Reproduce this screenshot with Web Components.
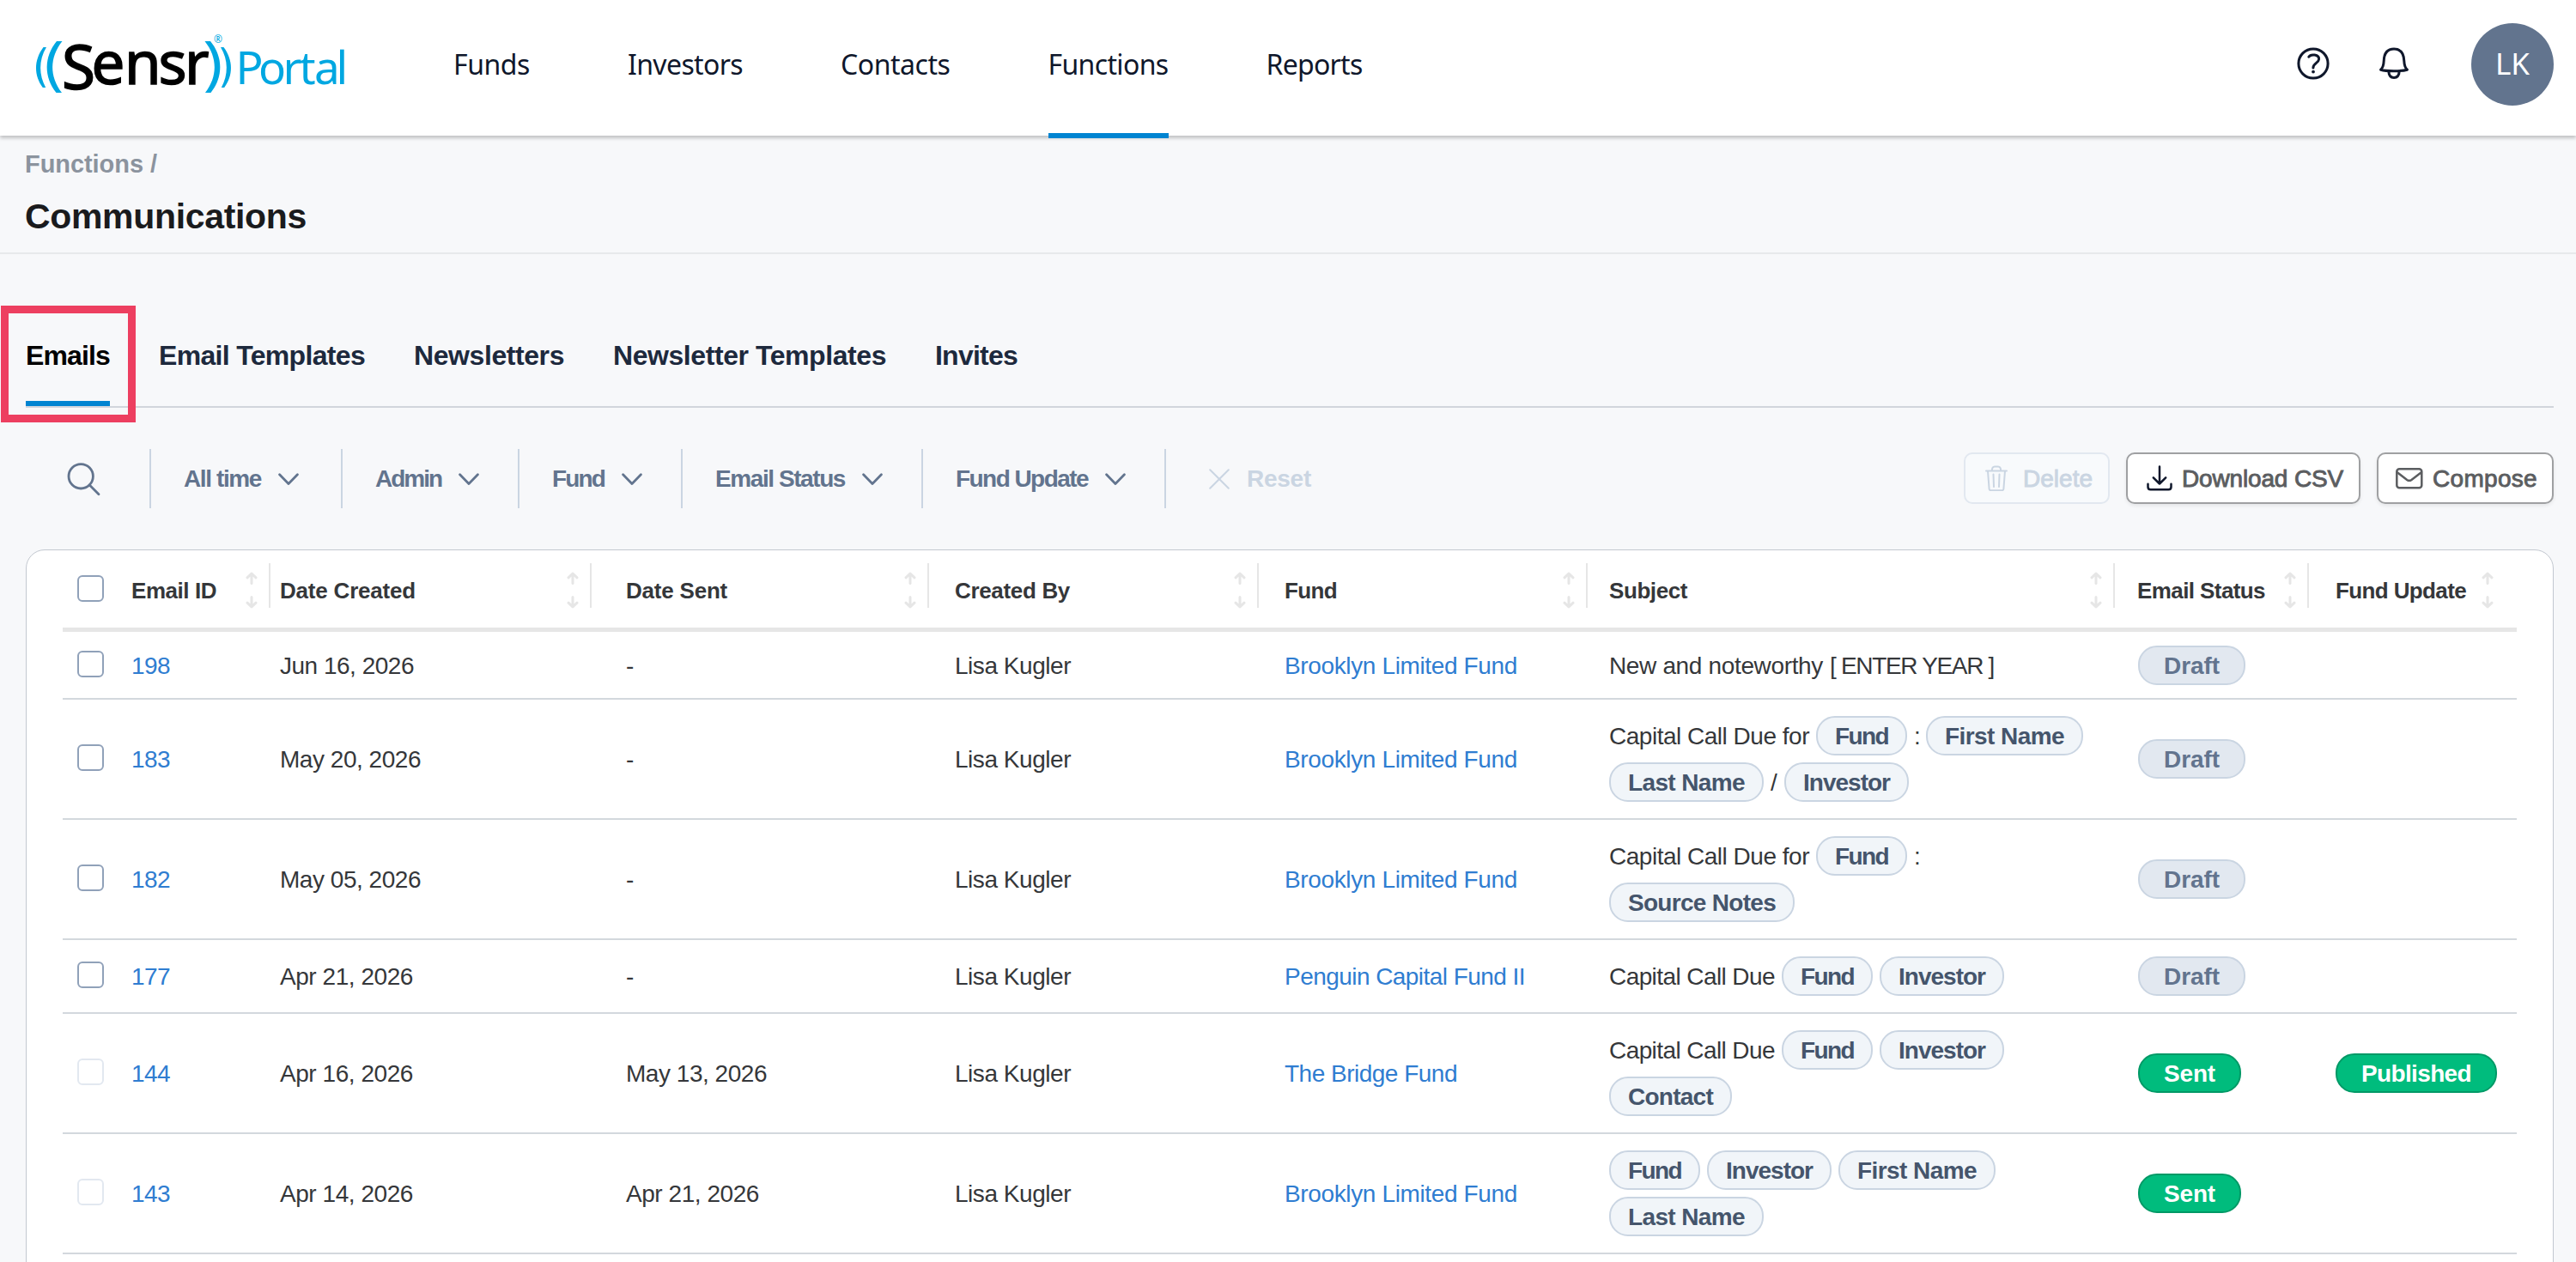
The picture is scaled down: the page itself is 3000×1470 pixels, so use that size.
<!DOCTYPE html>
<html lang="en">
<head>
<meta charset="utf-8">
<title>Communications</title>
<style>
    body {
        margin: 0;
        width: 3000px;
        height: 1470px;
        overflow: hidden;
        background: #f7f8fa;
        font-family: "Liberation Sans", Arial, sans-serif;
        font-size: 28px;
        color: #35373a;
    }
</style>
</head>
<body>
<portal-header></portal-header>
<page-title section="Functions /">Communications</page-title>
<emails-page></emails-page>

<script>
const icons = {
    help: `<circle cx="20" cy="20" r="17.1"/><path d="M14.8 12.2c2.2-3.6 12.2-3 11.8 2.8-.3 4.3-6.7 4.6-6.7 10"/><circle cx="20" cy="29.6" r="1.9" fill="currentColor" stroke="none"/>`,
    bell: `<path d="M4.6 27.2c2.7-2.6 3.4-5.600 3.600-10.2C8.500 8.400 11.400 3 20 3s11.500 5.400 11.800 14c.2 4.600.9 7.600 3.600 10.200C29 29.200 11 29.200 4.600 27.200z"/><path d="M13.800 29.200c.3 4.600 2.700 7.300 6.200 7.300s5.900-2.700 6.200-7.300"/>`,
    search: `<circle cx="16.2" cy="16.8" r="14.200"/><path d="M26.300 27l10.700 10.800"/>`,
    chevron: `<path d="M1.600 1.800L12 12.400 22.400 1.800"/>`,
    close: `<path d="M1.200 1.200l21.600 21.600M22.800 1.200L1.200 22.800"/>`,
    trash: `<path d="M1 6.500h24M3 6.500l1.600 21c.1 1.200.8 1.700 1.800 1.700h13.200c1 0 1.700-.5 1.800-1.700L23 6.500M7.800 6.500c0-3.600 1-5 3.200-5h4c2.200 0 3.200 1.400 3.200 5M9.500 10.500l.5 14.500M16.500 10.500L16 25"/>`,
    download: `<path d="M15 1.500v20M7.800 14.300l7.200 7.200 7.200-7.200M1.500 21.800v3.400c0 2 1 3 3 3h21c2 0 3-1 3-3v-3.400"/>`,
    mail: `<rect x="1.300" y="1.300" width="29" height="22" rx="3"/><path d="M1.800 5.200l11.400 8.700c1.800 1.300 3.400 1.300 5.200 0l11.400-8.700"/>`,
    sort: `<path d="M7 15.500V4.500M2 8.800L7 4l5 4.800M7 31.500v11M2 38.200L7 43l5-4.800"/>`
};

const icon = (name, w, h, stroke) =>
    `<svg width="${w}" height="${h}" viewBox="0 0 ${w} ${h}" fill="none" stroke="currentColor" stroke-width="${stroke}" stroke-linecap="round" stroke-linejoin="round">${icons[name]}</svg>`;

// Text set to a given advance width by adjusting the tracking
class FitText extends HTMLElement {
    constructor() {
        super();
        this.attachShadow({ mode: 'open' });
        this.shadowRoot.innerHTML = `
            <style>
                :host { display: inline-block; white-space: nowrap; }
                span { display: inline-block; }
            </style>
            <span><slot></slot></span>
        `;
    }

    connectedCallback() {
        const width = parseFloat(this.getAttribute('w'));
        const span = this.shadowRoot.querySelector('span');
        const natural = span.getBoundingClientRect().width;
        this.style.width = width + 'px';
        span.style.letterSpacing = (width - natural) / this.textContent.length + 'px';
    }
}

class BrandLogo extends HTMLElement {
    constructor() {
        super();
        this.attachShadow({ mode: 'open' });
        this.shadowRoot.innerHTML = `
            <style>
                :host { display: block; width: 488px; height: 158px; }
                svg { display: block; }
                text { font-family: "Noto Sans", sans-serif; }
            </style>
            <svg width="440" height="158" viewBox="40 0 440 158">
                <g fill="#00a7e1">
                    <path d="M50.500 55h3.500c-9 15-9 32-.8 47h-3.400c-10.500-14-10.500-32 .7-47z"/>
                    <path d="M66 48h6.500c-15 19-15 41-.5 60h-6.500c-14.500-18-14.500-42 .5-60z"/>
                    <path d="M245 48h-6.500c15 19 15 41 .5 60h6.500c14.500-18 14.500-42-.5-60z"/>
                    <path d="M260.500 55H257c9 15 9 32 .8 47h3.400c10.500-14 10.500-32-.7-47z"/>
                </g>
                <g fill="#000" stroke="#000" stroke-width="1.500">
                    <text font-size="71" x="72" y="103.500">S</text>
                    <text font-size="69" x="106.500 145 184.500 215" y="98">ensr</text>
                </g>
                <text font-size="53" fill="#00a7e1" x="274.500 301 329.500 348.500 366 391.500" y="98.300">Portal</text>
                <text font-size="12" fill="#00a7e1" x="249" y="49.500">®</text>
            </svg>
        `;
    }
}

class NavItem extends HTMLElement {
    constructor() {
        super();
        this.attachShadow({ mode: 'open' });
        this.shadowRoot.innerHTML = `
            <style>
                :host {
                    position: relative;
                    display: flex;
                    align-items: center;
                    height: 149px;
                    padding-bottom: 9px;
                    font-size: 32px;
                    color: #0f172b;
                }
                :host([active])::after {
                    content: "";
                    position: absolute;
                    left: 0;
                    right: 0;
                    bottom: -3px;
                    height: 6px;
                    background: #0084d1;
                }
            </style>
            <slot></slot>
        `;
    }
}

class PortalHeader extends HTMLElement {
    constructor() {
        super();
        this.attachShadow({ mode: 'open' });
        this.shadowRoot.innerHTML = `
            <style>
                :host {
                    position: relative;
                    display: flex;
                    box-sizing: border-box;
                    height: 158px;
                    padding: 0 26px 0 40px;
                    background: #fff;
                    box-shadow: 0 3px 4px rgba(0, 0, 0, .22);
                    font-family: "Noto Sans", sans-serif;
                    color: #0f172b;
                }
                nav { display: flex; gap: 114px; }
                .tools {
                    display: flex;
                    margin-left: auto;
                    padding-top: 27px;
                }
                .tools svg { margin: 27px 54px 0 0; }
                .tools svg + svg { margin-right: 70px; }
                .avatar {
                    display: flex;
                    align-items: center;
                    justify-content: center;
                    box-sizing: border-box;
                    width: 96px;
                    height: 96px;
                    padding-bottom: 3px;
                    border-radius: 50%;
                    background: #62748e;
                    color: #fff;
                    font-size: 35px;
                }
            </style>
            <brand-logo></brand-logo>
            <nav>
                <nav-item><fit-text w="89">Funds</fit-text></nav-item>
                <nav-item><fit-text w="134">Investors</fit-text></nav-item>
                <nav-item><fit-text w="127.500">Contacts</fit-text></nav-item>
                <nav-item active><fit-text w="140">Functions</fit-text></nav-item>
                <nav-item><fit-text w="112">Reports</fit-text></nav-item>
            </nav>
            <div class="tools">
                ${icon('help', 40, 40, 3)}
                ${icon('bell', 40, 40, 3)}
                <div class="avatar">LK</div>
            </div>
        `;
    }
}

class PageTitle extends HTMLElement {
    constructor() {
        super();
        this.attachShadow({ mode: 'open' });
        this.shadowRoot.innerHTML = `
            <style>
                :host {
                    display: block;
                    padding: 16px 29px 18px;
                    border-bottom: 2px solid #e7e9eb;
                    font-weight: bold;
                }
                .section {
                    margin-bottom: 20px;
                    font-size: 29px;
                    line-height: 34px;
                    color: #8b939e;
                }
                h1 {
                    margin: 0;
                    font-size: 41px;
                    line-height: 48px;
                    color: #1a1b1d;
                }
            </style>
            <div class="section"><fit-text w="154">${this.getAttribute('section')}</fit-text></div>
            <h1><fit-text w="328">${this.textContent}</fit-text></h1>
        `;
    }
}

class TabItem extends HTMLElement {
    constructor() {
        super();
        this.attachShadow({ mode: 'open' });
        this.shadowRoot.innerHTML = `
            <style>
                :host {
                    display: block;
                    padding-bottom: 33px;
                    border-bottom: 6px solid transparent;
                    font-size: 32px;
                    font-weight: bold;
                    line-height: 40px;
                    color: #1d293d;
                }
                :host([active]) { border-color: #0084d1; color: #000; }
            </style>
            <slot></slot>
        `;
    }
}

class FilterItem extends HTMLElement {
    constructor() {
        super();
        this.attachShadow({ mode: 'open' });
        this.shadowRoot.innerHTML = `
            <style>
                :host {
                    display: flex;
                    align-items: center;
                    gap: 20px;
                    box-sizing: border-box;
                    padding-left: 38px;
                    border-right: 2px solid #cad5e2;
                    font-weight: bold;
                    color: #62748e;
                }
            </style>
            <slot></slot>
            ${icon('chevron', 24, 14, 2.8)}
        `;
    }
}

class UiButton extends HTMLElement {
    constructor() {
        super();
        this.attachShadow({ mode: 'open' });
        this.shadowRoot.innerHTML = `
            <style>
                :host {
                    display: flex;
                    align-items: center;
                    box-sizing: border-box;
                    height: 60px;
                    border: 2px solid #9fa0a2;
                    border-radius: 10px;
                    background: #fff;
                    box-shadow: 0 2px 4px rgba(0, 0, 0, .08);
                    color: #5b5d60;
                    -webkit-text-stroke: .9px currentColor;
                }
                :host([disabled]) {
                    border-color: #e2e8f0;
                    background: #f8fafc;
                    box-shadow: none;
                    color: #cad5e2;
                }
                ::slotted(fit-text) { margin-top: 2px; }
            </style>
            <slot></slot>
        `;
    }
}

class CheckBox extends HTMLElement {
    constructor() {
        super();
        this.attachShadow({ mode: 'open' });
        this.shadowRoot.innerHTML = `
            <style>
                :host {
                    display: block;
                    box-sizing: border-box;
                    width: 31px;
                    height: 31px;
                    border: 2px solid #90a1b9;
                    border-radius: 6px;
                    background: #fff;
                }
                :host([disabled]) { border-color: #e2e8f0; }
            </style>
        `;
    }
}

class ChipTag extends HTMLElement {
    constructor() {
        super();
        this.attachShadow({ mode: 'open' });
        this.shadowRoot.innerHTML = `
            <style>
                :host {
                    display: block;
                    box-sizing: border-box;
                    width: fit-content;
                    height: 46px;
                    padding: 0 20px;
                    border: 2px solid #cad5e2;
                    border-radius: 22px;
                    background: #f1f5f9;
                    color: #45556c;
                    font-weight: bold;
                    line-height: 43px;
                }
                :host([kind]) { padding: 0 28px; }
                :host([kind=draft]) { background: #e2e8f0; color: #62748e; }
                :host([kind=done]) { border-color: #009966; background: #00bc7d; color: #fff; }
            </style>
            <slot></slot>
        `;
    }
}

const columns = '79px 163px 374px 393px 384px 383px 614px 226px 242px';

class HeaderCell extends HTMLElement {
    constructor() {
        super();
        this.attachShadow({ mode: 'open' });
        this.shadowRoot.innerHTML = `
            <style>
                :host {
                    display: flex;
                    justify-content: space-between;
                    align-items: center;
                    box-sizing: border-box;
                    height: 52px;
                    padding: 0 13px 0 var(--pad, 1px);
                    border-right: 2px solid #e6e6e6;
                    font-size: 26px;
                    font-weight: bold;
                }
                :host(:last-of-type) { border-right-color: transparent; padding-right: 25px; }
                .label { padding-top: 12px; }
                svg { color: #e6e6e6; margin-top: 9px; }
            </style>
            <div class="label"><slot></slot></div>
            ${icon('sort', 14, 45, 3)}
        `;
    }
}

class EmailRow extends HTMLElement {
    constructor() {
        super();
        this.attachShadow({ mode: 'open' });
    }

    set data(row) {
        const fit = ([text, w]) => `<fit-text w="${w}">${text}</fit-text>`;
        const subject = row.subject.map(p => p[2] ? `<chip-tag>${fit(p)}</chip-tag>` : fit(p)).join('');
        const status = row.sent
            ? `<chip-tag kind="done">${fit(['Sent', 60])}</chip-tag>`
            : `<chip-tag kind="draft">${fit(['Draft', 65])}</chip-tag>`;
        this.shadowRoot.innerHTML = `
            <style>
                :host {
                    display: grid;
                    grid-template-columns: ${columns};
                    align-items: center;
                    box-sizing: border-box;
                    height: ${row.height}px;
                    border-bottom: 2px solid #d3d8dd;
                }
                check-box { margin: 0 0 3px 17px; }
                .text { padding-top: 2px; }
                .link { color: #2f7dd1; }
                .subject {
                    display: flex;
                    flex-wrap: wrap;
                    align-items: center;
                    gap: 8px;
                    padding: 0 29px 0 25px;
                }
                .subject > fit-text { padding-top: 2px; line-height: 44px; }
            </style>
            <check-box ${row.sent ? 'disabled' : ''}></check-box>
            <div class="text link" style="padding-left:1px">${fit([row.id, 45])}</div>
            <div class="text" style="padding-left:11px">${fit(row.created)}</div>
            <div class="text" style="padding-left:40px">${fit(row.dateSent)}</div>
            <div class="text" style="padding-left:30px">${fit(['Lisa Kugler', 135])}</div>
            <div class="text link" style="padding-left:30px">${fit(row.fund)}</div>
            <div class="subject">${subject}</div>
            <div style="padding-left:27px">${status}</div>
            <div style="padding-left:31px">${row.published ? `<chip-tag kind="done">${fit(['Published', 128])}</chip-tag>` : ''}</div>
        `;
    }
}

// text, width, is it a merge tag
const FUND = ['Fund', 62, true];
const INVESTOR = ['Investor', 101, true];
const FIRST = ['First Name', 139, true];
const LAST = ['Last Name', 136, true];
const NONE = ['-', 10];
const BROOKLYN = ['Brooklyn Limited Fund', 271];

const emails = [
    { id: '198', height: 79, created: ['Jun 16, 2026', 156], dateSent: NONE, fund: BROOKLYN,
      subject: [['New and noteworthy', 249], ['[ ENTER YEAR ]', 191]] },
    { id: '183', height: 140, created: ['May 20, 2026', 164], dateSent: NONE, fund: BROOKLYN,
      subject: [['Capital Call Due for', 233], FUND, [':', 6], FIRST, LAST, ['/', 8], INVESTOR] },
    { id: '182', height: 140, created: ['May 05, 2026', 164], dateSent: NONE, fund: BROOKLYN,
      subject: [['Capital Call Due for', 233], FUND, [':', 6], ['Source Notes', 172, true]] },
    { id: '177', height: 86, created: ['Apr 21, 2026', 155], dateSent: NONE, fund: ['Penguin Capital Fund II', 280],
      subject: [['Capital Call Due', 193], FUND, INVESTOR] },
    { id: '144', height: 140, created: ['Apr 16, 2026', 155], dateSent: ['May 13, 2026', 164], fund: ['The Bridge Fund', 201],
      subject: [['Capital Call Due', 193], FUND, INVESTOR, ['Contact', 99, true]], sent: true, published: true },
    { id: '143', height: 140, created: ['Apr 14, 2026', 155], dateSent: ['Apr 21, 2026', 155], fund: BROOKLYN,
      subject: [FUND, INVESTOR, FIRST, LAST], sent: true }
];

class EmailTable extends HTMLElement {
    constructor() {
        super();
        this.attachShadow({ mode: 'open' });
        this.shadowRoot.innerHTML = `
            <style>
                :host {
                    display: block;
                    box-sizing: border-box;
                    height: 900px;
                    padding: 0 42px;
                    border: 1px solid #c3c8d0;
                    border-radius: 22px;
                    background: #fff;
                }
                .head {
                    display: grid;
                    grid-template-columns: ${columns};
                    box-sizing: border-box;
                    height: 95px;
                    padding-top: 15px;
                    border-bottom: 5px solid #e6e6e6;
                }
                check-box { margin: 14px 0 0 17px; }
            </style>
            <div class="head">
                <check-box></check-box>
                <header-cell><fit-text w="99">Email ID</fit-text></header-cell>
                <header-cell style="--pad:11px"><fit-text w="158">Date Created</fit-text></header-cell>
                <header-cell style="--pad:40px"><fit-text w="118">Date Sent</fit-text></header-cell>
                <header-cell style="--pad:30px"><fit-text w="134">Created By</fit-text></header-cell>
                <header-cell style="--pad:30px"><fit-text w="61">Fund</fit-text></header-cell>
                <header-cell style="--pad:25px"><fit-text w="91">Subject</fit-text></header-cell>
                <header-cell style="--pad:26px"><fit-text w="149">Email Status</fit-text></header-cell>
                <header-cell style="--pad:31px"><fit-text w="152">Fund Update</fit-text></header-cell>
            </div>
            <div class="rows"></div>
        `;
    }

    connectedCallback() {
        const rows = this.shadowRoot.querySelector('.rows');
        emails.forEach(email => {
            const row = document.createElement('email-row');
            rows.append(row);
            row.data = email;
        });
    }
}

class EmailsPage extends HTMLElement {
    constructor() {
        super();
        this.attachShadow({ mode: 'open' });
        this.shadowRoot.innerHTML = `
            <style>
                :host {
                    display: block;
                    padding: 98px 26px 0 30px;
                }
                .tabs {
                    display: flex;
                    gap: 57px;
                    border-bottom: 2px solid #d1d5dc;
                }
                .toolbar {
                    display: flex;
                    height: 69px;
                    margin: 48px 0;
                }
                .search {
                    display: flex;
                    align-items: center;
                    box-sizing: border-box;
                    width: 146px;
                    padding-left: 48px;
                    border-right: 2px solid #cad5e2;
                    color: #62748e;
                }
                .reset {
                    display: flex;
                    align-items: center;
                    gap: 20px;
                    padding-left: 50px;
                    font-weight: bold;
                    color: #cad5e2;
                }
                .actions {
                    display: flex;
                    gap: 19px;
                    margin: 4px 0 0 auto;
                }
                .highlight {
                    position: absolute;
                    left: 1px;
                    top: 356px;
                    box-sizing: border-box;
                    width: 157px;
                    height: 136px;
                    border: 9px solid #ed3f60;
                }
            </style>
            <div class="tabs">
                <tab-item active><fit-text w="98">Emails</fit-text></tab-item>
                <tab-item><fit-text w="240">Email Templates</fit-text></tab-item>
                <tab-item><fit-text w="175">Newsletters</fit-text></tab-item>
                <tab-item><fit-text w="318">Newsletter Templates</fit-text></tab-item>
                <tab-item><fit-text w="96">Invites</fit-text></tab-item>
            </div>
            <div class="toolbar">
                <div class="search">${icon('search', 40, 40, 2.8)}</div>
                <filter-item style="width:223px"><fit-text w="90">All time</fit-text></filter-item>
                <filter-item style="width:206px"><fit-text w="77">Admin</fit-text></filter-item>
                <filter-item style="width:190px"><fit-text w="61">Fund</fit-text></filter-item>
                <filter-item style="width:280px"><fit-text w="151">Email Status</fit-text></filter-item>
                <filter-item style="width:283px"><fit-text w="154">Fund Update</fit-text></filter-item>
                <div class="reset">${icon('close', 24, 24, 2)}<fit-text w="75">Reset</fit-text></div>
                <div class="actions">
                    <ui-button disabled style="width:170px;padding-left:23px;gap:18px">${icon('trash', 26, 30, 2)}<fit-text w="81">Delete</fit-text></ui-button>
                    <ui-button style="width:273px;padding-left:22px;gap:11px"><span style="display:flex;color:#0f172b">${icon('download', 30, 30, 2.5)}</span><fit-text w="188">Download CSV</fit-text></ui-button>
                    <ui-button style="width:206px;padding-left:20px;gap:11px">${icon('mail', 32, 25, 2.5)}<fit-text w="122">Compose</fit-text></ui-button>
                </div>
            </div>
            <email-table></email-table>
            <div class="highlight"></div>
        `;
    }
}

customElements.define('fit-text', FitText);
customElements.define('brand-logo', BrandLogo);
customElements.define('nav-item', NavItem);
customElements.define('tab-item', TabItem);
customElements.define('filter-item', FilterItem);
customElements.define('ui-button', UiButton);
customElements.define('check-box', CheckBox);
customElements.define('chip-tag', ChipTag);
customElements.define('header-cell', HeaderCell);
customElements.define('email-row', EmailRow);
customElements.define('email-table', EmailTable);
customElements.define('portal-header', PortalHeader);
customElements.define('page-title', PageTitle);
customElements.define('emails-page', EmailsPage);
</script>
</body>
</html>
